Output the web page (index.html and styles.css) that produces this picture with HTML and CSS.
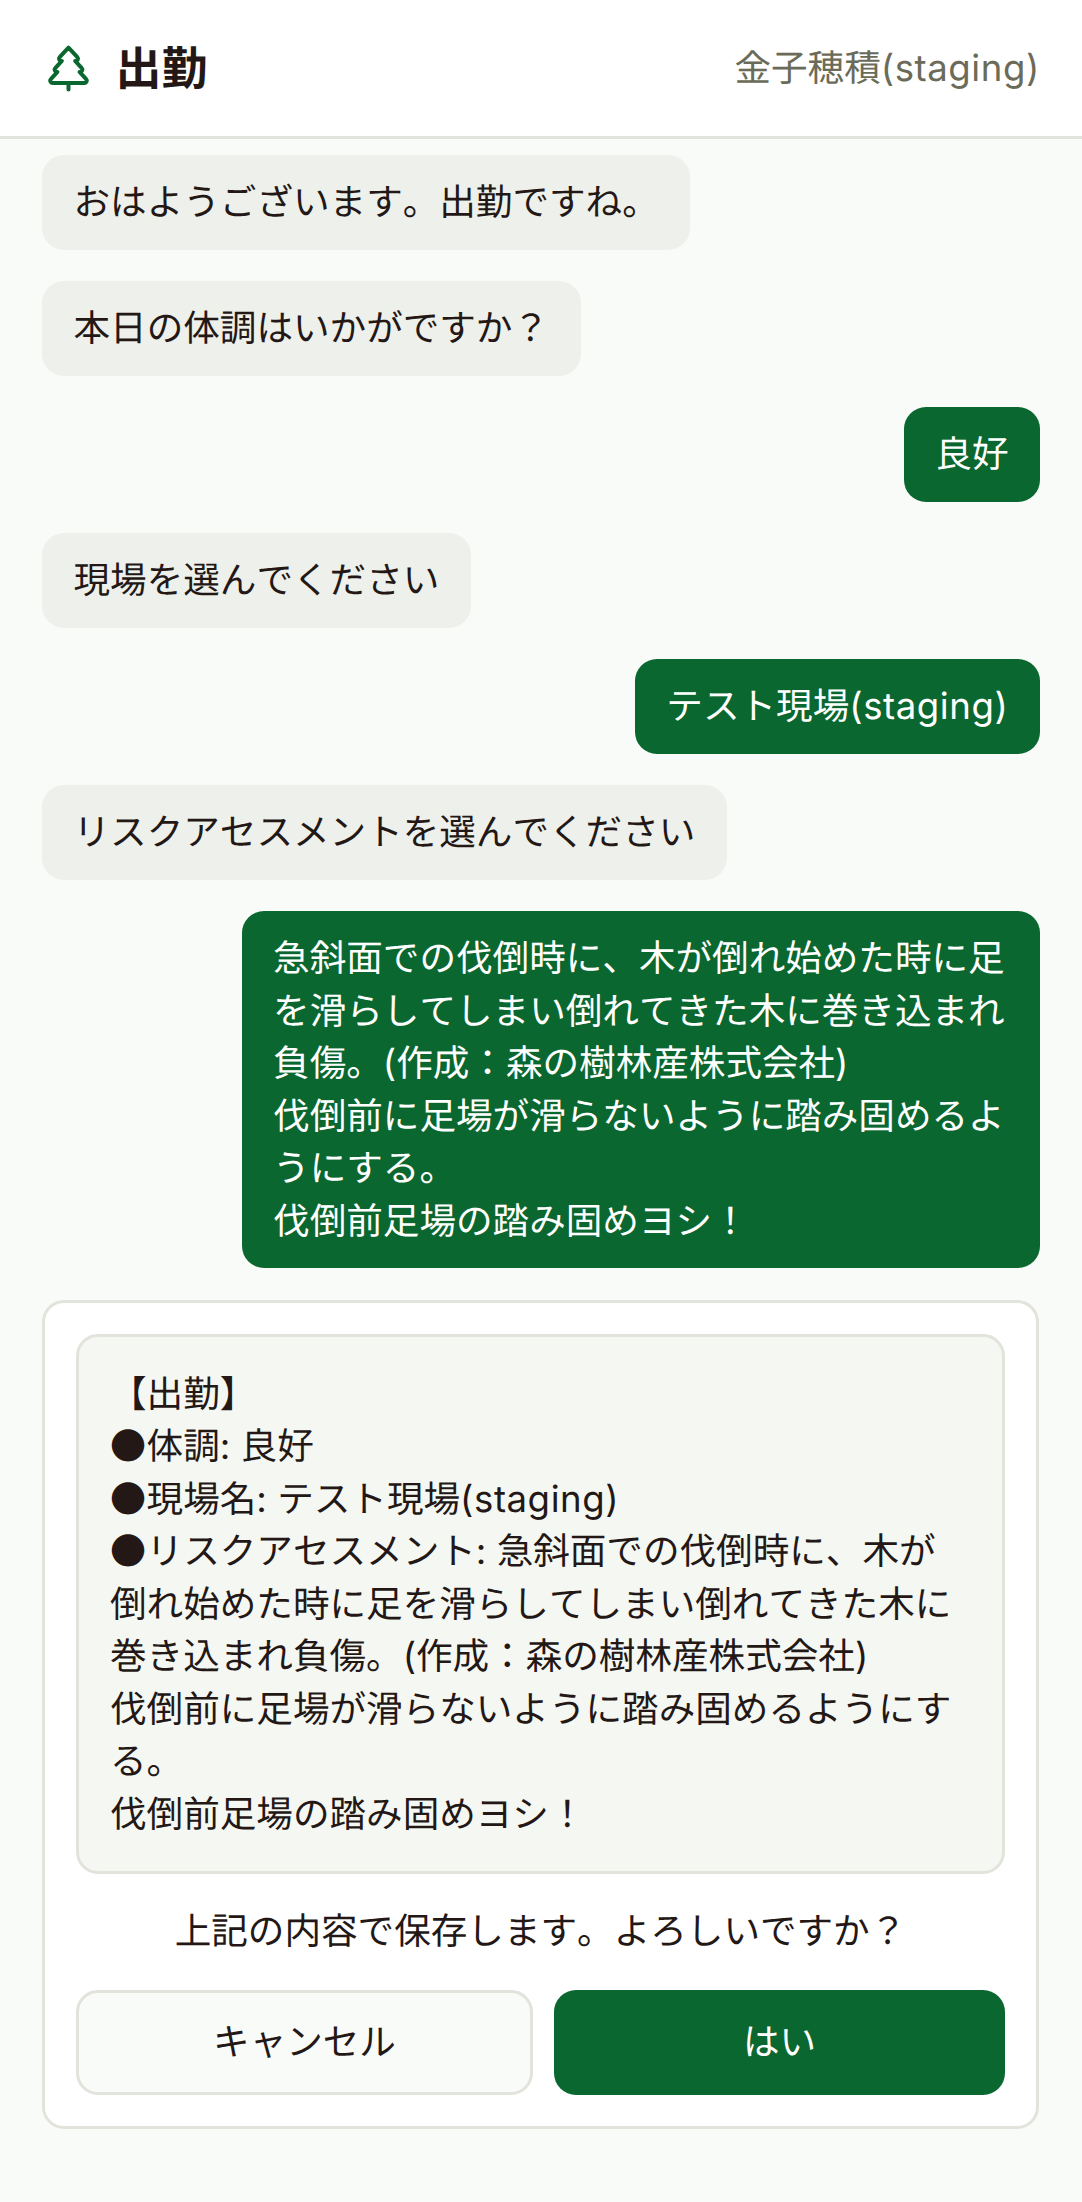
FILE: index.html
```html
<!DOCTYPE html>
<html lang="ja">
<head>
<meta charset="utf-8">
<title>出勤</title>
<link rel="stylesheet" href="styles.css">
</head>
<body>
<header class="header">
  <div class="brand">
    <svg class="logo" viewBox="0 0 24 24" fill="none" stroke="currentColor" stroke-width="1.8" stroke-linecap="round" stroke-linejoin="round">
      <path d="m17 14 3 3.3a1 1 0 0 1-.7 1.7H4.7a1 1 0 0 1-.7-1.7L7 14h-.3a1 1 0 0 1-.7-1.7L9 9h-.2A1 1 0 0 1 8 7.3L12 3l4 4.3a1 1 0 0 1-.8 1.7H15l3 3.3a1 1 0 0 1-.7 1.7H17Z"/>
      <path d="M12 22v-3"/>
    </svg>
    <h1 class="title">出勤</h1>
  </div>
  <div class="user-name">金子穂積<span class="latin">(staging)</span></div>
</header>
<main class="chat">
  <div class="bubble bot">おはようございます。出勤ですね。</div>
  <div class="bubble bot">本日の体調はいかがですか？</div>
  <div class="bubble me">良好</div>
  <div class="bubble bot">現場を選んでください</div>
  <div class="bubble me">テスト現場<span class="latin">(staging)</span></div>
  <div class="bubble bot">リスクアセスメントを選んでください</div>
  <div class="bubble me">急斜面での伐倒時に、木が倒れ始めた時に足を滑らしてしまい倒れてきた木に巻き込まれ負傷。(作成：森の樹林産株式会社)<br>伐倒前に足場が滑らないように踏み固めるようにする。<br>伐倒前足場の踏み固めヨシ！</div>
  <section class="card">
    <div class="summary">【出勤】<br><span class="dot">●</span>体調: 良好<br><span class="dot">●</span>現場名: テスト現場<span class="latin">(staging)</span><br><span class="dot">●</span>リスクアセスメント: 急斜面での伐倒時に、木が<br>倒れ始めた時に足を滑らしてしまい倒れてきた木に巻き込まれ負傷。(作成：森の樹林産株式会社)<br>伐倒前に足場が滑らないように踏み固めるようにする。<br>伐倒前足場の踏み固めヨシ！</div>
    <p class="question">上記の内容で保存します。よろしいですか？</p>
    <div class="actions">
      <button class="btn cancel" type="button">キャンセル</button>
      <button class="btn ok" type="button">はい</button>
    </div>
  </section>
</main>
</body>
</html>
```
FILE: styles.css
```css
* { box-sizing: border-box; }
html, body { margin: 0; padding: 0; }
body {
  width: 1082px;
  height: 2202px;
  overflow: hidden;
  background: #f9fbf8;
  color: #231815;
  font-family: Inter, "Noto Sans CJK JP", sans-serif;
  font-size: 36.6px;
  line-height: 52.5px;
  text-rendering: geometricPrecision;
  font-kerning: none;
  font-feature-settings: "chws" 0, "palt" 0;
}
.header {
  height: 139px;
  background: #fff;
  border-bottom: 3px solid #e2e3db;
  padding: 0 42px 0 41.5px;
  display: flex;
  align-items: center;
  justify-content: space-between;
}
.brand { display: flex; align-items: center; gap: 21px; }
.logo { width: 53px; height: 53px; color: #0b6730; flex: none; }
.title { margin: 3px 0 0; font-size: 46px; font-weight: 700; line-height: 1.4; }
.user-name { color: #6b6b59; }
.latin { letter-spacing: 0.6px; }
.chat {
  padding: 16px 42px 0;
  display: flex;
  flex-direction: column;
  gap: 31.5px;
}
.bubble {
  max-width: 80%;
  padding: 21px 31.5px;
  border-radius: 22px;
  width: fit-content;
}
.bot { background: #eef0eb; }
.me { background: #0b6730; color: #fff; align-self: flex-end; }
.card {
  margin-right: 1px;
  background: #fff;
  border: 3px solid #e2e3db;
  border-radius: 22px;
  padding: 31px;
}
.summary {
  background: #f5f7f3;
  border: 3px solid #e2e3db;
  border-radius: 22px;
  padding: 31px;
}
.dot { font-family: "Noto Sans CJK JP", sans-serif; font-size: 36px; line-height: 0; margin-right: 0.6px; }
.question { margin: 31px 0 32.5px; text-align: center; }
.actions { display: flex; gap: 21px; }
.btn {
  flex: 1;
  height: 105px;
  border-radius: 22px;
  font: inherit;
  padding: 0;
}
.cancel { background: #f9fbf8; color: #231815; border: 3px solid #e2e3db; }
.ok { background: #0b6730; color: #fff; border: 0; }
```
